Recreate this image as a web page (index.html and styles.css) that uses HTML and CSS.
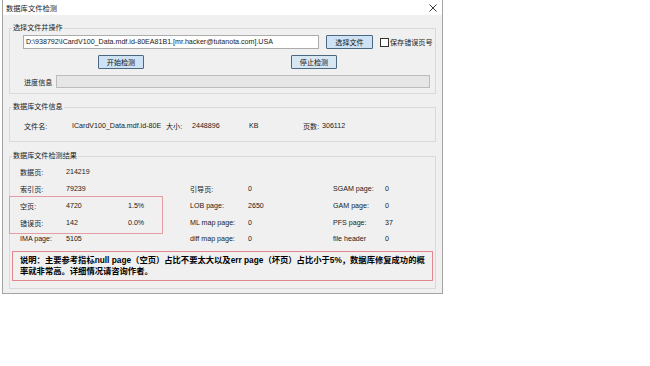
FILE: index.html
```html
<!DOCTYPE html>
<html lang="zh-CN">
<head>
  <meta charset="UTF-8"/>
  <title>数据库文件检测</title>
  <link rel="stylesheet" href="styles.css">
</head>
<body>

  <div class="window">
    <div class="titlebar">
      <span class="title">数据库文件检测</span>
      <svg class="close" width="8" height="8" viewBox="0 0 8 8">
        <path d="M0.5 0.5L7.5 7.5M7.5 0.5L0.5 7.5" stroke="#222" stroke-width="0.9" fill="none"/>
      </svg>
    </div>

    <div class="client">
      <!-- file select + actions -->
      <fieldset class="group">
        <legend>选择文件并操作</legend>
        <div class="ops">
          <div class="file-row">
            <div class="textbox">D:\938792\ICardV100_Data.mdf.id-80EA81B1.[mr.hacker@tutanota.com].USA</div>
            <button class="btn btn-pick">选择文件</button>
            <label class="check"><span class="box"></span>保存错误页号</label>
          </div>
          <div class="btn-row">
            <button class="btn btn-start">开始检测</button>
            <button class="btn btn-stop">停止检测</button>
          </div>
          <div class="progress-row">
            <span class="progress-label">进度信息</span>
            <div class="progress"></div>
          </div>
        </div>
      </fieldset>

      <!-- file info -->
      <fieldset class="group group-info">
        <legend>数据库文件信息</legend>
        <div class="info-row">
          <span class="i-name">文件名:</span>
          <span class="i-file">ICardV100_Data.mdf.id-80E</span>
          <span class="i-size">大小:</span>
          <span class="i-bytes">2448896</span>
          <span class="i-unit">KB</span>
          <span class="i-pages">页数:</span>
          <span>306112</span>
        </div>
      </fieldset>

      <!-- check result -->
      <fieldset class="group group-result">
        <legend>数据库文件检测结果</legend>
        <div class="stats">
          <div class="stat-row">
            <span class="c1">数据页:</span><span class="c2">214219</span>
          </div>
          <div class="stat-row">
            <span class="c1">索引页:</span><span class="c2">79239</span><span class="c3"></span>
            <span class="c4">引导页:</span><span class="c5">0</span>
            <span class="c6">SGAM page:</span><span>0</span>
          </div>
          <div class="flagged">
            <div class="stat-row">
              <span class="c1">空页:</span><span class="c2">4720</span><span class="c3">1.5%</span>
              <span class="c4">LOB page:</span><span class="c5">2650</span>
              <span class="c6">GAM page:</span><span>0</span>
            </div>
            <div class="stat-row">
              <span class="c1">错误页:</span><span class="c2">142</span><span class="c3">0.0%</span>
              <span class="c4">ML map page:</span><span class="c5">0</span>
              <span class="c6">PFS page:</span><span>37</span>
            </div>
          </div>
          <div class="stat-row">
            <span class="c1">IMA page:</span><span class="c2">5105</span><span class="c3"></span>
            <span class="c4">diff map page:</span><span class="c5">0</span>
            <span class="c6">file header</span><span>0</span>
          </div>
        </div>
        <div class="note">
          说明：主要参考指标null page（空页）占比不要太大以及err page（坏页）占比小于5%，数据库修复成功的概<br>率就非常高。详细情况请咨询作者。
        </div>
      </fieldset>
    </div>
  </div>

</body>
</html>
```

FILE: styles.css
```css
body{margin:0;background:#fff;font-family:"Liberation Sans","Noto Sans CJK SC",sans-serif;font-size:7.1px;color:#1a1a1a}
.window{width:439px;margin-left:2px;border:1px solid #a3a3a3;border-top:none;background:#f0f0f0;padding-bottom:4px}
.titlebar{height:15px;background:#fff;display:flex;align-items:center;justify-content:space-between;padding:0 5px 0 3px}
.title{font-size:7.3px;color:#222}
.close{display:block}
.client{padding:0 6px}

.group{margin:8px 0 0;padding:0;border:1px solid #d9d9d9;min-width:0}
.group legend{margin-left:2px;padding:0 1px;line-height:10px;color:#222}
.group-result{margin-top:9px}

/* operations */
.ops{padding:2px 0 5px 13px}
.file-row{display:flex;align-items:center}
.textbox{width:292px;height:12px;line-height:12px;border:1px solid #acacac;background:#fff;padding-left:2px;white-space:nowrap;overflow:hidden}
.btn{height:14px;padding:0;font:inherit;color:#111;background:#cde3f5;border:1px solid #4c6780;border-radius:1px;box-sizing:border-box}
.btn-pick{width:47px;margin-left:7px}
.check{display:flex;align-items:center;margin-left:7px;white-space:nowrap}
.box{width:7px;height:7px;border:1px solid #333;background:#fff;margin-right:1px}
.btn-row{display:flex;margin-top:6px}
.btn-start{width:46px;margin-left:75px}
.btn-stop{width:46px;margin-left:147px;background:#d7e6f3}
.progress-row{display:flex;align-items:center;margin-top:6px}
.progress-label{width:32px;margin-left:1px}
.progress{width:372px;height:11px;background:#e6e6e6;border:1px solid #bcbcbc}

/* file info */
.info-row{display:flex;align-items:center;height:10px;padding:9px 0 10px 14px;white-space:nowrap}
.i-name{width:48px}
.i-file{width:89px;overflow:hidden;margin-right:5px}
.i-size{width:26px}
.i-bytes{width:57px}
.i-unit{width:54px}
.i-pages{width:19px}

/* results */
.stats{padding:3px 0 0 10px}
.stat-row{display:flex;align-items:center;height:16.75px;white-space:nowrap}
.c1{width:46px}
.c2{width:62px}
.c3{width:62px}
.c4{width:58px}
.c5{width:85px}
.c6{width:52px}
.flagged{position:relative}
.flagged::before{content:"";position:absolute;left:-11px;top:-2px;width:152px;height:36px;border:1px solid #e59ca3}
.note{margin:3px 2px 7px;padding:3px 0 0 7px;height:25px;border:1px solid #e3868e;font-weight:700;font-size:8.3px;line-height:11px;color:#000;white-space:nowrap}
```
